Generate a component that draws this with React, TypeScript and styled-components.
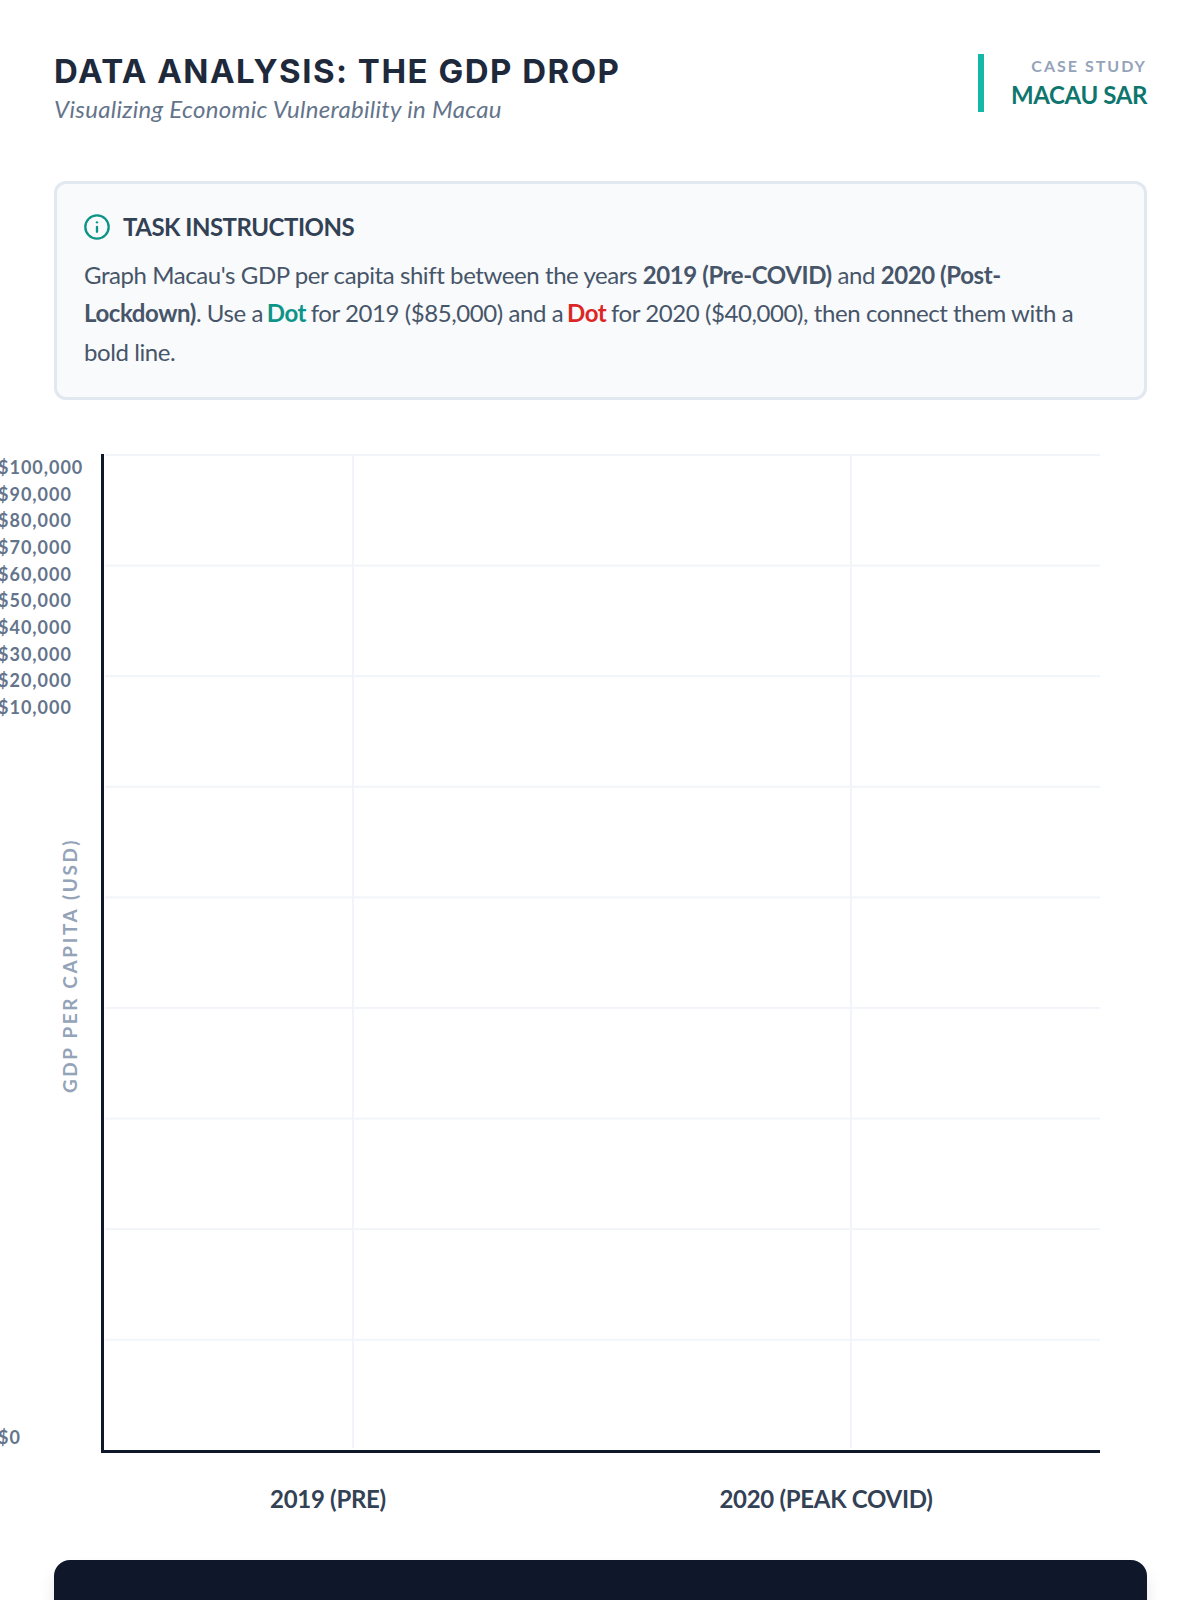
import React from 'react';
import styled, {createGlobalStyle} from "styled-components";
import {Info} from "lucide-react";

const GlobalStyle = createGlobalStyle`
html, body {
    margin: 0;
    padding: 0;
    background: #ffffff;
}
* {
    box-sizing: border-box;
}
`;

const Y_TICKS = ['$100,000', '$90,000', '$80,000', '$70,000', '$60,000', '$50,000', '$40,000', '$30,000', '$20,000', '$10,000'];

export default function App() {
    return (
        <Page>
            <GlobalStyle/>
            <Header>
                <div>
                    <Title>DATA ANALYSIS: THE GDP DROP</Title>
                    <Subtitle>Visualizing Economic Vulnerability in Macau</Subtitle>
                </div>
                <CaseTag>
                    <CaseLabel>CASE STUDY</CaseLabel>
                    <CaseName>MACAU SAR</CaseName>
                </CaseTag>
            </Header>

            <Instructions>
                <InstructionsHeading>
                    <InfoIcon size={28} strokeWidth={2} color="#0d9488"/>
                    <span>TASK INSTRUCTIONS</span>
                </InstructionsHeading>
                <InstructionsText>
                    Graph Macau's GDP per capita shift between the years <strong>2019 (Pre-COVID)</strong> and <strong>2020 (Post-Lockdown)</strong>. Use a <Dot color="#0d9488">Dot</Dot> for 2019 ($85,000) and a <Dot color="#dc2626">Dot</Dot> for 2020 ($40,000), then connect them with a bold line.
                </InstructionsText>
            </Instructions>

            <Chart>
                <Plot>
                    <GridLines/>
                    <Ticks>
                        {Y_TICKS.map(tick => <Tick key={tick}>{tick}</Tick>)}
                    </Ticks>
                    <ZeroTick>$0</ZeroTick>
                    <AxisTitle>GDP PER CAPITA (USD)</AxisTitle>
                </Plot>
                <XLabels>
                    <XLabel>2019 (PRE)</XLabel>
                    <XLabel>2020 (PEAK COVID)</XLabel>
                </XLabels>
            </Chart>

            <Footer/>
        </Page>
    );
}

const Page = styled.div`
width: 1200px;
height: 1600px;
overflow: hidden;
padding: 54px 53px 0 54px;
background: #ffffff;
font-family: Lato, "Liberation Sans", sans-serif;
`;

const Header = styled.header`
display: flex;
justify-content: space-between;
align-items: flex-start;
`;

const Title = styled.h1`
margin: 0;
font-family: Inter, "Liberation Sans", sans-serif;
font-size: 33px;
line-height: 34px;
font-weight: 700;
letter-spacing: 1.5px;
color: #1e293b;
`;

const Subtitle = styled.p`
margin: 7px 0 0;
font-size: 24px;
line-height: 28px;
font-style: italic;
letter-spacing: 0.3px;
color: #64748b;
`;

const CaseTag = styled.div`
height: 58px;
padding-left: 27px;
border-left: 6px solid #14b8a6;
text-align: right;
`;

const CaseLabel = styled.div`
font-size: 16px;
line-height: 24px;
font-weight: 700;
letter-spacing: 2px;
color: #94a3b8;
`;

const CaseName = styled.div`
margin-top: 1px;
font-size: 24px;
line-height: 32px;
font-weight: 700;
letter-spacing: -0.4px;
color: #0f766e;
`;

const Instructions = styled.section`
height: 219px;
margin-top: 58px;
padding: 27px;
background: #f8fafc;
border: 3px solid #e2e8f0;
border-radius: 12px;
`;

const InstructionsHeading = styled.h2`
display: flex;
align-items: center;
gap: 12px;
margin: 0 0 13px;
font-size: 24px;
line-height: 32px;
font-weight: 700;
letter-spacing: -0.5px;
color: #334155;
`;

const InfoIcon = styled(Info)`
margin-left: -1px;
`;

const InstructionsText = styled.p`
margin: 0;
font-size: 24px;
line-height: 38.4px;
letter-spacing: -0.42px;
color: #475569;

strong {
    font-weight: 700;
}
`;

const Dot = styled.strong<{color: string}>`
margin: 0 -1px 0 -2px;
color: ${props => props.color};
`;

const Chart = styled.section`
margin-top: 54px;
`;

const Plot = styled.div`
position: relative;
width: 999px;
height: 999px;
margin-left: 47px;
border-left: 3px solid #0f172a;
border-bottom: 3px solid #0f172a;
`;

const GridLines = styled.div`
position: absolute;
left: 1px;
top: 0;
right: 0;
bottom: 2px;
background-image:
    linear-gradient(to bottom, #f1f5f9 2px, transparent 2px),
    linear-gradient(to right, transparent 247px, #f1f5f9 247px, #f1f5f9 249px, transparent 249px, transparent 745px, #f1f5f9 745px, #f1f5f9 747px, transparent 747px);
background-size: 100% 110.6px, 100% 100%;
`;

const Ticks = styled.div`
position: absolute;
left: -106px;
top: 0;
`;

const Tick = styled.div`
font-size: 18px;
line-height: 26.67px;
font-weight: 700;
letter-spacing: 1px;
color: #64748b;
white-space: nowrap;
`;

const ZeroTick = styled(Tick)`
position: absolute;
left: -106px;
bottom: -1px;
`;

const AxisTitle = styled.div`
position: absolute;
left: -44px;
bottom: 357px;
writing-mode: vertical-rl;
transform: rotate(180deg);
font-size: 19px;
line-height: 20px;
font-weight: 700;
letter-spacing: 2.6px;
color: #94a3b8;
white-space: nowrap;
`;

const XLabels = styled.div`
display: grid;
grid-template-columns: 1fr 1fr;
width: 996px;
margin: 30px 0 0 25px;
`;

const XLabel = styled.div`
font-size: 24px;
line-height: 32px;
font-weight: 700;
letter-spacing: -0.3px;
text-align: center;
color: #334155;
`;

const Footer = styled.footer`
height: 200px;
margin-top: 45px;
background: #0f172a;
border-radius: 16px;
box-shadow: 0 10px 15px rgba(0, 0, 0, 0.1);
`;
